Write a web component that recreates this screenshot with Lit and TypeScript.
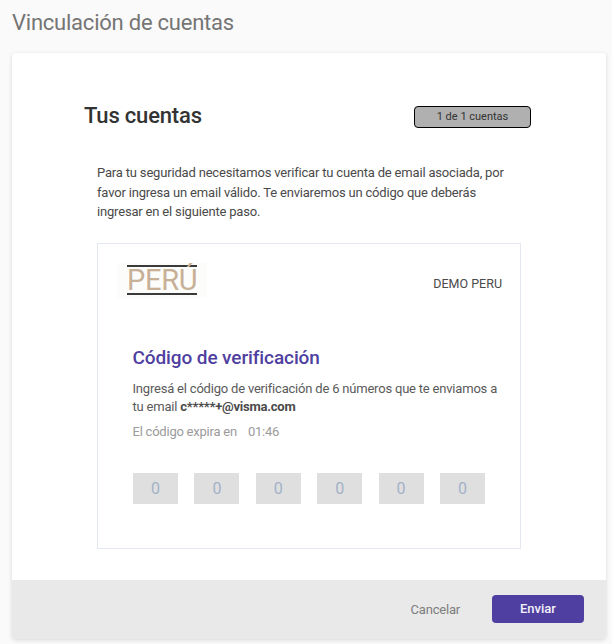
import { LitElement, html, css } from "lit";
import { customElement } from "lit/decorators.js";

@customElement("app-root")
export class AppRoot extends LitElement {
  static styles = css`
    :host {
      display: block;
      height: 644px;
      overflow: hidden;
      background: #fafafa;
      font-family: Roboto, "Liberation Sans", sans-serif;
      color: #444;
      box-sizing: border-box;
      padding: 0 6px 0 12px;
    }
    h1 {
      margin: 0;
      height: 53px;
      padding-top: 10px;
      box-sizing: border-box;
      font-size: 22px;
      line-height: 26px;
      font-weight: 400;
      letter-spacing: -0.23px;
      color: #757575;
    }
    .card {
      height: 586px;
      background: #fff;
      border-radius: 4px;
      box-shadow: 0 1px 4px rgba(0, 0, 0, 0.14);
      display: flex;
      flex-direction: column;
      overflow: hidden;
    }
    .body {
      flex: 1;
      padding: 50px 75px 0 72px;
    }
    .head {
      display: flex;
      justify-content: space-between;
      align-items: center;
      height: 26px;
    }
    h2 {
      margin: 0;
      font-size: 22px;
      line-height: 26px;
      font-weight: 500;
      letter-spacing: -0.18px;
      color: #333;
    }
    .badge {
      width: 117px;
      height: 22px;
      box-sizing: border-box;
      margin-top: 1px;
      border: 1px solid #000;
      border-radius: 4px;
      background: #b0b0b0;
      color: #333;
      font-size: 11px;
      line-height: 20px;
      text-align: center;
    }
    .intro {
      margin: 34px 0 0 13px;
      width: 415px;
      font-size: 13px;
      line-height: 19.5px;
      letter-spacing: -0.18px;
      color: #4a4a4a;
    }
    .box {
      margin: 21px 0 0 13px;
      width: 424px;
      height: 306px;
      box-sizing: border-box;
      border: 1px solid #e3e7ef;
      padding: 19px 18px 0 19px;
    }
    .brand {
      display: flex;
      justify-content: space-between;
      align-items: center;
      height: 35px;
    }
    .logo {
      width: 90px;
      height: 35px;
      box-sizing: border-box;
      background: #fcfcfb;
      padding-left: 10px;
    }
    .logo-in {
      width: 70px;
      height: 30px;
      margin-top: 2px;
      box-sizing: border-box;
      border-top: 2px solid #3a3a3a;
      border-bottom: 2px solid #3a3a3a;
      font-size: 29px;
      line-height: 26px;
      color: #c8b096;
      letter-spacing: -0.3px;
      white-space: nowrap;
    }
    .company {
      font-size: 12.5px;
      color: #4a4a4a;
      position: relative;
      top: 3px;
    }
    .content {
      padding: 0 0 0 15.5px;
    }
    h3 {
      margin: 49px 0 0;
      font-size: 19px;
      line-height: 22px;
      font-weight: 500;
      letter-spacing: -0.1px;
      color: #4f3fa0;
    }
    .desc {
      margin: 11px 0 0;
      font-size: 13px;
      line-height: 18.5px;
      letter-spacing: -0.2px;
      color: #5a5a5a;
    }
    .desc b {
      font-weight: 700;
      letter-spacing: -0.23px;
      color: #4a4a4a;
    }
    .expire {
      margin: 6px 0 0;
      font-size: 13px;
      line-height: 18px;
      letter-spacing: -0.23px;
      color: #9b9b9b;
      display: flex;
      gap: 11px;
    }
    .code {
      margin-top: 32px;
      margin-left: 0.5px;
      display: flex;
      gap: 16.4px;
    }
    .digit {
      width: 45px;
      height: 31px;
      background: #dfdfdf;
      color: #a3b2c9;
      font-size: 16px;
      line-height: 31px;
      text-align: center;
    }
    .foot {
      height: 59px;
      background: #e9e9e9;
      display: flex;
      justify-content: flex-end;
      align-items: center;
      padding-right: 22px;
      gap: 32px;
      flex: none;
    }
    .cancel {
      font-size: 13px;
      letter-spacing: -0.2px;
      color: #7d7d7d;
    }
    .send {
      width: 92px;
      height: 28px;
      border-radius: 4px;
      background: #4f3fa0;
      color: #f2f1f8;
      font-size: 13px;
      font-weight: 500;
      line-height: 28px;
      text-align: center;
      margin-top: -1px;
    }
  `;

  render() {
    return html`
      <h1>Vinculación de cuentas</h1>
      <div class="card">
        <div class="body">
          <div class="head">
            <h2>Tus cuentas</h2>
            <div class="badge">1 de 1 cuentas</div>
          </div>
          <p class="intro">
            Para tu seguridad necesitamos verificar tu cuenta de email asociada, por
            favor ingresa un email válido. Te enviaremos un código que deberás
            ingresar en el siguiente paso.
          </p>
          <div class="box">
            <div class="brand">
              <div class="logo"><div class="logo-in">PERÚ</div></div>
              <div class="company">DEMO PERU</div>
            </div>
            <div class="content">
              <h3>Código de verificación</h3>
              <p class="desc">
                Ingresá el código de verificación de 6 números que te enviamos a
                tu email <b>c*****+@visma.com</b>
              </p>
              <div class="expire"><span>El código expira en</span><span>01:46</span></div>
              <div class="code">
                ${[0, 1, 2, 3, 4, 5].map(() => html`<div class="digit">0</div>`)}
              </div>
            </div>
          </div>
        </div>
        <div class="foot">
          <span class="cancel">Cancelar</span>
          <div class="send">Enviar</div>
        </div>
      </div>
    `;
  }
}
